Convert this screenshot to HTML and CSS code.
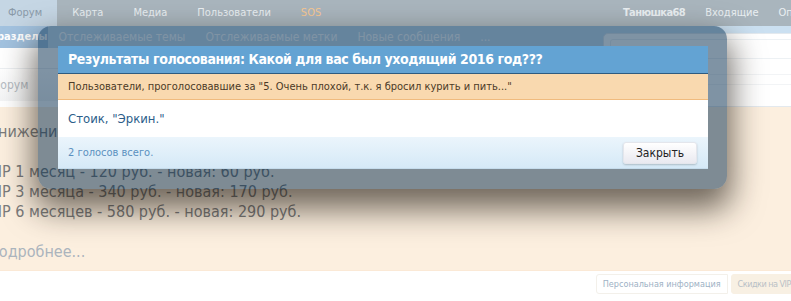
FILE: index.html
```html
<!DOCTYPE html>
<html lang="ru">

<head>
    <meta charset="UTF-8">
    <title>Результаты голосования</title>
    <link rel="stylesheet" href="styles.css">
</head>

<body>

    <header>
        <nav class="navTabs">
            <a class="tab selected" href="#">Форум</a>
            <a class="tab" href="#">Карта</a>
            <a class="tab" href="#">Медиа</a>
            <a class="tab" href="#">Пользователи</a>
            <a class="tab sos" href="#">SOS</a>

            <div class="visitor">
                <a class="tab user" href="#">Танюшка68</a>
                <a class="tab" href="#">Входящие</a>
                <a class="tab" href="#">Оповещения</a>
            </div>
        </nav>

        <nav class="subLinks">
            <a class="current" href="#">разделы</a>
            <a href="#">Отслеживаемые темы</a>
            <a href="#">Отслеживаемые метки</a>
            <a href="#">Новые сообщения</a>
            <a href="#">...</a>
        </nav>
    </header>

    <div class="searchPanel">
        <div class="searchBox"></div>
        <div class="searchLine"></div>
        <div class="searchLine"></div>
    </div>

    <div class="breadcrumb">
        <a href="#">Форум</a>
    </div>

    <section class="notice">
        <p>Снижение цен на VIP статус:</p>
        <p>&nbsp;</p>
        <p>VIP 1 месяц - 120 руб. - новая: 60 руб.</p>
        <p>VIP 3 месяца - 340 руб. - новая: 170 руб.</p>
        <p>VIP 6 месяцев - 580 руб. - новая: 290 руб.</p>
        <p>&nbsp;</p>
        <p><a class="more" href="#">Подробнее...</a></p>
    </section>

    <div class="noticeTabs">
        <a class="noticeTab" href="#">Персональная информация</a>
        <a class="noticeTab active" href="#">Скидки на VIP статус</a>
    </div>

    <!-- окно с результатами -->
    <div class="overlay">
        <div class="dialog">
            <h2 class="heading">Результаты голосования: Какой для вас был уходящий 2016 год???</h2>
            <p class="subHeading">Пользователи, проголосовавшие за "5. Очень плохой, т.к. я бросил курить и пить..."</p>
            <p class="voters">Стоик, "Эркин."</p>
            <div class="footer">
                <span class="total">2 голосов всего.</span>
                <button class="close">Закрыть</button>
            </div>
        </div>
    </div>

</body></html>
```

FILE: styles.css
```css
body {
    margin: 0;
    width: 791px;
    height: 301px;
    overflow: hidden;
    background-color: white;
    font-family: "DejaVu Sans", sans-serif;
    font-stretch: condensed;
}

a {
    text-decoration: none;
}

.navTabs {
    display: flex;
    width: 855px;
    height: 26px;
    background-color: #a9b5bd;
    font-size: 11px;
    line-height: 26px;
    white-space: nowrap;
}

.navTabs .tab {
    color: #eaeff2;
    padding: 0 15px;
}

.navTabs .selected {
    background-color: #c5d6e4;
    color: #8a9aa9;
    padding: 0 15px 0 8px;
}

.navTabs .sos {
    color: #f7c894;
}

.visitor {
    display: flex;
    margin-left: auto;
}

.visitor .tab {
    padding: 0 10px;
}

.visitor .user {
    font-weight: bold;
    letter-spacing: -0.6px;
}

.subLinks {
    display: flex;
    height: 22px;
    background-color: #cbe0f1;
    font-size: 12px;
    line-height: 22px;
    white-space: nowrap;
}

.subLinks a {
    color: white;
    padding: 0 10px;
}

.subLinks .current {
    background-color: #a2c2df;
    font-size: 11px;
    font-weight: bold;
    padding: 0 1px 0 0;
    margin-left: -3px;
}

.searchPanel {
    position: absolute;
    top: 33px;
    left: 603px;
    width: 200px;
    height: 72px;
    background-color: white;
    border: 1px solid #e3e9ee;
    border-radius: 5px 0 0 5px;
}

.searchBox {
    height: 18px;
    margin: 5px 0 6px 6px;
    border: 1px solid #edf1f4;
    border-radius: 3px;
}

.searchLine {
    height: 9px;
    border-bottom: 1px solid #f2f4f6;
}

.breadcrumb {
    height: 32px;
    margin-top: 20px;
    border-top: 1px solid #eceff2;
    background: linear-gradient(white, #f3f4f5);
    font-size: 12px;
    line-height: 32px;
    margin-bottom: 6px;
}

.breadcrumb a {
    color: #b5bcc3;
    margin-left: -9px;
}

.notice {
    height: 148px;
    padding: 15px 0 0 0;
    background-color: #fcefdf;
    border-bottom: 1px solid #fbe9d6;
    font-size: 16px;
    line-height: 20px;
    color: #7b7b7b;
    white-space: nowrap;
}

.notice p {
    margin: 0 0 0 -12px;
}

.notice .more {
    color: #abb4bd;
}

.noticeTabs {
    display: flex;
    justify-content: flex-end;
    margin: 3px -34px 0 0;
    font-size: 9px;
    line-height: 18px;
    white-space: nowrap;
}

.noticeTab {
    color: #9db1c4;
    padding: 0 6px;
    background-color: white;
    border: 1px solid #f3f0ea;
    border-radius: 3px 0 0 3px;
}

.noticeTab.active {
    color: #b9c0c6;
    background-color: #f8f0e3;
    border-color: #f8f0e3;
    margin-left: 3px;
    letter-spacing: -0.5px;
}

.overlay {
    position: absolute;
    top: 26px;
    left: 38px;
    width: 650px;
    padding: 20px 19px 20px 20px;
    border-radius: 13px;
    background-color: rgba(0, 40, 74, 0.5);
    box-shadow: 0 16px 32px 4px rgba(25, 18, 10, 0.62);
}

.dialog {
    background-color: white;
}

.heading {
    margin: 0;
    height: 27px;
    padding: 0 10px;
    background-color: #63a3d3;
    border-bottom: 1px solid #2d5b80;
    color: white;
    font-size: 14px;
    letter-spacing: -0.4px;
    line-height: 27px;
    white-space: nowrap;
}

.subHeading {
    margin: 0;
    height: 25px;
    padding: 0 10px;
    background-color: #f9d9af;
    border-bottom: 1px solid #f0bb7e;
    color: #4b3a27;
    font-size: 11px;
    line-height: 25px;
}

.voters {
    margin: 0;
    height: 37px;
    padding: 0 10px;
    color: #2c5e8a;
    font-size: 13px;
    line-height: 37px;
}

.footer {
    display: flex;
    justify-content: space-between;
    align-items: center;
    height: 31px;
    padding: 0 11px 0 10px;
    background: linear-gradient(#ebf5fc, #d5e9f7);
    border-bottom: 1px solid #c5dcec;
}

.total {
    color: #5b90bf;
    font-size: 11px;
}

.close {
    width: 74px;
    height: 22px;
    border: 1px solid #e4e6ec;
    border-radius: 3px;
    background: linear-gradient(white, #e9e9f0);
    box-shadow: 0 1px 2px rgba(0, 0, 0, 0.2);
    font-family: "DejaVu Sans", sans-serif;
    font-stretch: condensed;
    font-size: 12px;
    color: #222;
    cursor: pointer;
}
```
